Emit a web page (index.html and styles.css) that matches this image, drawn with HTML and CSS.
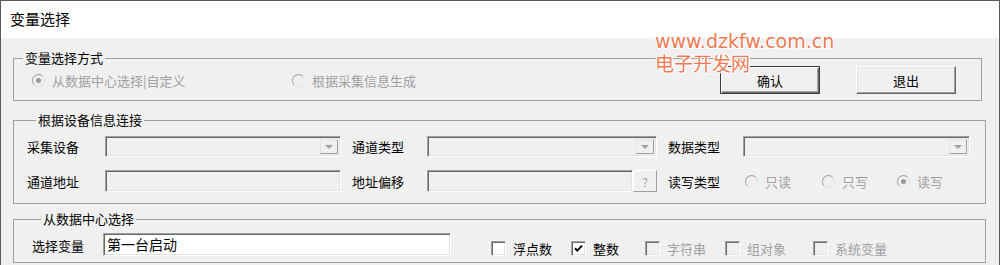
FILE: index.html
```html
<!DOCTYPE html>
<html lang="zh-CN">

<head>
    <meta charset="UTF-8">
    <title>变量选择</title>
    <link rel="stylesheet" href="styles.css">
</head>

<body>
    <div class="window">
        <div class="titlebar">变量选择</div>

        <div class="client">
            <fieldset class="group group-mode">
                <legend>变量选择方式</legend>
                <div class="mode-row">
                    <label class="opt opt-first disabled"><span class="radio checked"></span>从数据中心选择|自定义</label>
                    <label class="opt disabled"><span class="radio"></span>根据采集信息生成</label>
                    <button class="btn btn-default">确认</button>
                    <button class="btn btn-exit">退出</button>
                </div>
            </fieldset>

            <fieldset class="group group-device">
                <legend>根据设备信息连接</legend>
                <div class="device-grid">
                    <span class="lbl">采集设备</span>
                    <div class="combo"><span class="drop"></span></div>
                    <span class="lbl lbl-mid">通道类型</span>
                    <div class="combo"><span class="drop"></span></div>
                    <span class="lbl lbl-mid">数据类型</span>
                    <div class="combo"><span class="drop"></span></div>

                    <span class="lbl">通道地址</span>
                    <div class="field"></div>
                    <span class="lbl lbl-mid">地址偏移</span>
                    <div class="field-group">
                        <div class="field"></div>
                        <span class="help-btn">?</span>
                    </div>
                    <span class="lbl lbl-mid">读写类型</span>
                    <div class="rw-opts">
                        <label class="opt rw disabled"><span class="radio"></span>只读</label>
                        <label class="opt rw disabled"><span class="radio"></span>只写</label>
                        <label class="opt disabled"><span class="radio checked"></span>读写</label>
                    </div>
                </div>
            </fieldset>

            <fieldset class="group group-center">
                <legend>从数据中心选择</legend>
                <div class="var-row">
                    <span class="lbl lbl-var">选择变量</span>
                    <div class="field field-white">第一台启动</div>
                    <label class="chk-item w80"><span class="check"></span>浮点数</label>
                    <label class="chk-item w74"><span class="check on"><svg width="11" height="11" viewBox="0 0 11 11"><path d="M2 5.2 L4.3 7.6 L9 2.6" fill="none" stroke="#000" stroke-width="2"/></svg></span>整数</label>
                    <label class="chk-item w80 disabled"><span class="check"></span>字符串</label>
                    <label class="chk-item w88 disabled"><span class="check"></span>组对象</label>
                    <label class="chk-item disabled"><span class="check"></span>系统变量</label>
                </div>
            </fieldset>
        </div>

        <div class="watermark">www.dzkfw.com.cn<br><span class="wm-cn">电子开发网</span></div>
    </div>
</body>

</html>
```

FILE: styles.css
```css
:root {
    --face: #f0f0f0;
    --shadow: #a0a0a0;
    --dark-shadow: #696969;
    --light: #e3e3e3;
    --highlight: #ffffff;
    --grey-text: #a0a0a0;
    --frame: #5a5a5a;
}

* {
    box-sizing: border-box;
    margin: 0;
    padding: 0;
}

body {
    background: #fff;
    font-family: "Noto Sans CJK SC", "Noto Sans", sans-serif;
    font-size: 13px;
    color: #000;
}

.window {
    position: relative;
    width: 1000px;
    min-height: 265px;
    border: 1px solid var(--frame);
    border-bottom: none;
    background: var(--face);
}

.titlebar {
    height: 37px;
    line-height: 36px;
    padding-left: 9px;
    background: #fff;
    font-size: 15px;
}

.client {
    padding: 13px 0 0 12px;
    border-right: 1px solid #e6e6e6;
    margin-right: 3px;
}

/* group boxes */
.group {
    border: 1px solid var(--shadow);
    padding: 0;
}

.group legend {
    margin-left: 9px;
    padding: 0 2px;
    font-size: 13px;
    line-height: 14px;
}

.group-mode {
    width: 969px;
    padding: 1px 25px 6px 0;
}

.group-device {
    width: 973px;
    margin-top: 12px;
    padding: 9px 0 11px 13px;
}

.group-center {
    width: 973px;
    margin-top: 8px;
    padding: 7px 0 6px 18px;
}

/* first group */
.mode-row {
    display: flex;
    align-items: center;
    padding-left: 18px;
}

.opt {
    display: flex;
    align-items: center;
    gap: 7px;
    line-height: 15px;
}

.opt.disabled {
    color: var(--grey-text);
}

.opt-first {
    width: 260px;
}

.radio {
    position: relative;
    width: 13px;
    height: 13px;
    border-radius: 50%;
    background: var(--face);
    border: 1px solid var(--shadow);
    border-right-color: var(--light);
    border-bottom-color: var(--light);
    flex-shrink: 0;
}

.radio.checked::after {
    content: "";
    position: absolute;
    left: 3px;
    top: 3px;
    width: 5px;
    height: 5px;
    border-radius: 50%;
    background: #9a9a9a;
}

.btn {
    width: 100px;
    height: 28px;
    background: var(--face);
    font-family: inherit;
    font-size: 13px;
    color: #000;
    border: 1px solid;
    border-color: var(--highlight) var(--dark-shadow) var(--dark-shadow) var(--highlight);
    box-shadow: inset -1px -1px 0 var(--shadow), inset 1px 1px 0 var(--light);
}

.btn-default {
    margin-left: auto;
    border: 1px solid #3c3c3c;
    box-shadow: inset 1px 1px 0 #fff, inset -1px -1px 0 var(--dark-shadow), inset -2px -2px 0 var(--shadow);
}

.btn-exit {
    margin-left: 36px;
}

/* device group */
.device-grid {
    display: grid;
    grid-template-columns: 78px 236px 86px 230px 86px 227px;
    grid-template-rows: 21px 22px;
    row-gap: 13px;
    align-items: center;
}

.lbl {
    line-height: 15px;
}

.lbl-mid {
    padding-left: 11px;
}

.combo,
.field {
    height: 100%;
    border: 1px solid;
    border-color: var(--shadow) var(--highlight) var(--highlight) var(--shadow);
    box-shadow: inset 1px 1px 0 var(--dark-shadow), inset -1px -1px 0 var(--light);
    background: var(--face);
}

.combo {
    display: flex;
    justify-content: flex-end;
    padding: 2px;
}

.drop {
    width: 18px;
    height: 100%;
    display: flex;
    align-items: center;
    justify-content: center;
    background: var(--face);
    border: 1px solid;
    border-color: var(--light) var(--shadow) var(--shadow) var(--light);
}

.drop::after {
    content: "";
    border-left: 4px solid transparent;
    border-right: 4px solid transparent;
    border-top: 4px solid var(--grey-text);
}

.field-group {
    display: flex;
    height: 100%;
}

.field-group .field {
    flex: 1;
}

.help-btn {
    width: 24px;
    display: flex;
    align-items: center;
    justify-content: center;
    color: var(--grey-text);
    font-size: 12px;
    background: var(--face);
    border: 1px solid;
    border-color: var(--highlight) var(--shadow) var(--shadow) var(--highlight);
}

.rw-opts {
    display: flex;
    align-items: center;
    padding-left: 2px;
}

.opt.rw {
    width: 77px;
}

.opt.rw + .opt.rw {
    width: 75px;
}

/* data center group */
.var-row {
    display: flex;
    align-items: flex-end;
}

.lbl-var {
    width: 71px;
    padding-bottom: 3px;
}

.field-white {
    width: 348px;
    height: 23px;
    margin-right: 40px;
    padding: 1px 0 0 3px;
    background: #fff;
    line-height: 18px;
    font-size: 14px;
}

.chk-item {
    display: flex;
    align-items: center;
    gap: 7px;
    line-height: 15px;
}

.chk-item.disabled {
    color: var(--grey-text);
}

.w80 {
    width: 80px;
}

.w74 {
    width: 74px;
}

.w88 {
    width: 88px;
}

.check {
    width: 15px;
    height: 15px;
    display: flex;
    align-items: center;
    justify-content: center;
    background: #fff;
    border: 1px solid;
    border-color: var(--shadow) var(--highlight) var(--highlight) var(--shadow);
    box-shadow: inset 1px 1px 0 var(--dark-shadow), inset -1px -1px 0 var(--light);
    flex-shrink: 0;
}

.chk-item.disabled .check {
    background: var(--face);
}

/* site watermark laid over the dialog */
.watermark {
    position: absolute;
    left: 654px;
    top: 29px;
    font-family: "DejaVu Sans", sans-serif;
    font-size: 19px;
    line-height: 22px;
    color: #ef7b55;
    text-shadow: 1px 0 0 #fff, -1px 0 0 #fff, 0 1px 0 #fff, 0 -1px 0 #fff, 1px 1px 0 #fff, -1px -1px 0 #fff, 1px -1px 0 #fff, -1px 1px 0 #fff;
}

.wm-cn {
    font-family: "Noto Sans CJK SC", sans-serif;
    font-size: 19px;
}
```
